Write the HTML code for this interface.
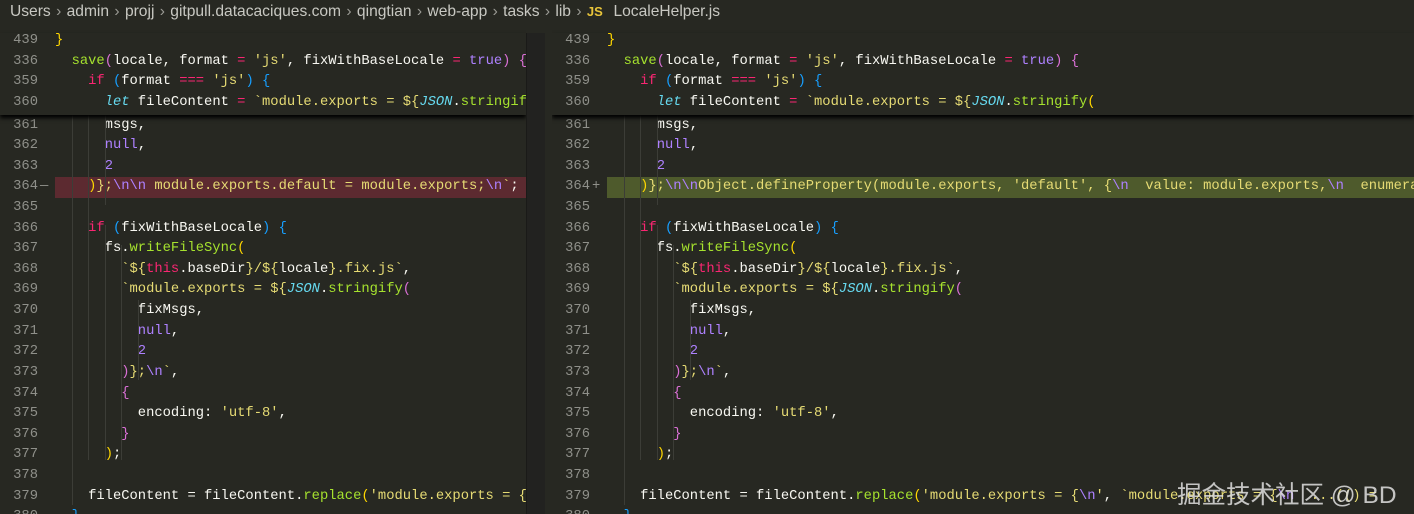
<!DOCTYPE html>
<html><head><meta charset="utf-8"><style>
body{margin:0;width:1414px;height:514px;overflow:hidden;background:#272822;font-family:"Liberation Mono",monospace;}
.bc{position:absolute;left:10px;top:3px;font:15.6px "Liberation Sans",sans-serif;color:#c8c8c2;white-space:pre;word-spacing:1px}
.bc .s{color:#9a9a94;}
.pane{position:absolute;top:0;height:514px;overflow:hidden;}
.row{position:absolute;left:0;height:20.6px;line-height:20.6px;font-size:13.8px;white-space:pre;width:2000px;}
.n{position:absolute;width:38px;text-align:right;color:#8f908a;left:0;}
.c{position:absolute;left:55px;color:#f8f8f2;}
.m{position:absolute;left:40px;color:#8f908a;}
.k{color:#f92672}.f{color:#a6e22e}.s1{color:#e6db74}.p{color:#ae81ff}.t{color:#66d9ef;font-style:italic}
.y{color:#ffd700}.pk{color:#da70d6}.bl{color:#179fff}.e{color:#ae81ff}
.del{background:#5c2a30}.ins{background:#4e5a2c}
.sticky{position:absolute;left:0;top:33px;height:82px;width:100%;background:#272822;box-shadow:0 3px 4px #000;z-index:2}
</style></head><body>
<div class="bc">Users <span class="s">›</span> admin <span class="s">›</span> projj <span class="s">›</span> gitpull.datacaciques.com <span class="s">›</span> qingtian <span class="s">›</span> web-app <span class="s">›</span> tasks <span class="s">›</span> lib <span class="s">›</span> <span style="color:#e8c43a;font-weight:bold;font-size:13px">JS</span>  LocaleHelper.js</div>

<div class="pane" style="left:0;width:526px" id="L"></div>
<div style="position:absolute;left:526px;top:33px;width:18px;height:481px;background:#222220;border-left:1px solid #1a1a18"></div>
<div class="pane" style="left:552px;width:862px" id="R"></div>
<div style="position:absolute;left:1177px;top:476px;font:24.5px 'Liberation Sans','Noto Sans CJK SC',sans-serif;color:#e0e0e0;opacity:.85;z-index:5">掘金技术社区 @ BD</div>
<script>
const common={
361:'      msgs,',362:'      <span class="p">null</span>,',363:'      <span class="p">2</span>',365:'',
366:'    <span class="k">if</span> <span class="bl">(</span>fixWithBaseLocale<span class="bl">)</span> <span class="bl">{</span>',
367:'      fs.<span class="f">writeFileSync</span><span class="y">(</span>',
368:'        <span class="s1">`${</span><span class="k">this</span>.baseDir<span class="s1">}/${</span>locale<span class="s1">}.fix.js`</span>,',
369:'        <span class="s1">`module.exports = ${</span><span class="t">JSON</span>.<span class="f">stringify</span><span class="pk">(</span>',
370:'          fixMsgs,',371:'          <span class="p">null</span>,',372:'          <span class="p">2</span>',
373:'        <span class="pk">)</span><span class="s1">};</span><span class="e">\\n</span><span class="s1">`</span>,',
374:'        <span class="pk">{</span>',375:'          encoding: <span class="s1">\'utf-8\'</span>,',376:'        <span class="pk">}</span>',
377:'      <span class="y">)</span>;',378:'',
379:'    fileContent = fileContent.<span class="f">replace</span><span class="y">(</span><span class="s1">\'module.exports = {</span><span class="e">\\n</span><span class="s1">\'</span>, <span class="s1">`module.exports = {</span><span class="e">\\n</span><span class="s1">  ...(() =</span>',
380:'  <span class="bl">}</span>'};
const head=[[439,'<span class="y">}</span>'],[336,'  <span class="f">save</span><span class="pk">(</span>locale, format <span class="k">=</span> <span class="s1">\'js\'</span>, fixWithBaseLocale <span class="k">=</span> <span class="p">true</span><span class="pk">)</span> <span class="pk">{</span>'],[359,'    <span class="k">if</span> <span class="bl">(</span>format <span class="k">===</span> <span class="s1">\'js\'</span><span class="bl">)</span> <span class="bl">{</span>'],[360,'      <span class="t">let</span> fileContent <span class="k">=</span> <span class="s1">`module.exports = ${</span><span class="t">JSON</span>.<span class="f">stringify</span><span class="y">(</span>']];
const cw=8.28;
function build(id,l364,cls,mark){
 const el=document.getElementById(id);let h='';
 const top=i=>(31+2+i*20.62).toFixed(1);
 for(let num=361;num<=380;num++){
  let code=num==364?l364:common[num];
  const i=num-361+4;
  h+=`<div class="row" style="top:${top(i)}px"><span class="n">${num}</span>${num==364?'<span class="m">'+mark+'</span>':''}<span class="c ${num==364?cls:''}" ${num==364?'style="left:55px;width:1000px"':''}>${code}</span></div>`;
 }
 [[1,115,505],[2,115,460],[3,115,205],[3,225,460],[4,245,460],[5,300,380]].forEach(g=>{h+=`<div style="position:absolute;left:${(55+g[0]*2*cw).toFixed(0)}px;top:${g[1]}px;width:1px;height:${g[2]-g[1]}px;background:#3c3d37"></div>`});
 h+='<div class="sticky">';
 head.forEach((r,i)=>{h+=`<div class="row" style="top:${(-2+i*20.62).toFixed(1)}px"><span class="n">${r[0]}</span><span class="c">${r[1]}</span></div>`});
 h+='</div>';
 el.innerHTML=h;
}
build('L','    <span class="y">)</span><span class="s1">};</span><span class="e">\\n\\n</span><span class="s1"> module.exports.default = module.exports;</span><span class="e">\\n</span><span class="s1">`</span>;','del','—');
build('R','    <span class="y">)</span><span class="s1">};</span><span class="e">\\n\\n</span><span class="s1">Object.defineProperty(module.exports, \'default\', {</span><span class="e">\\n</span><span class="s1">  value: module.exports,</span><span class="e">\\n</span><span class="s1">  enumerable: false</span>','ins','+');
</script>
</body></html>
